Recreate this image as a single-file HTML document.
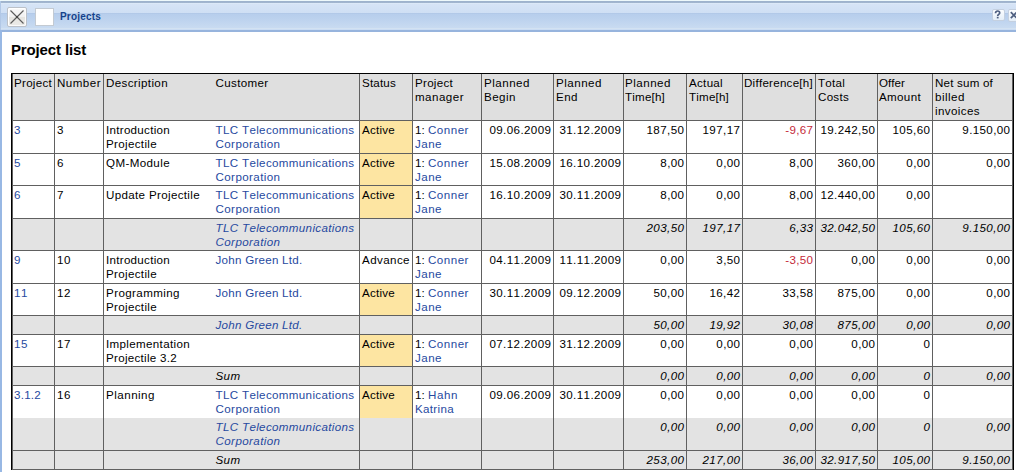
<!DOCTYPE html>
<html><head><meta charset="utf-8">
<style>
html,body{margin:0;padding:0;width:1016px;height:472px;overflow:hidden;background:#fff;font-family:"Liberation Sans",sans-serif;}
span{font-kerning:none;font-variant-ligatures:none;}
#frame{position:absolute;left:0;top:0;width:1016px;height:472px;overflow:hidden;background:#fff;}
#lb{position:absolute;left:0;top:30px;width:2px;height:442px;background:#98b8e4;}
#lt{position:absolute;left:0;top:1px;width:1px;height:29px;background:#b2c8e6;}
#tb{position:absolute;left:0;top:0;width:1016px;height:32px;
background:linear-gradient(to bottom,#eef9fb 0px,#eef9fb 1px,#9db2cc 1px,#a3b7cf 3px,#e2eefa 3px,#d6e4f6 4px,#cfdff4 13px,#b2c9e8 13px,#b2c9e8 14px,#b7ceec 14px,#bcd2ee 19px,#c9dbf1 28px,#d3e2f2 28px,#d3e2f2 29px,#cadcf3 29px,#cadcf3 30px,#97b4dd 30px,#97b4dd 32px);}
#closebtn{position:absolute;left:7px;top:7px;width:18px;height:18px;border:1px solid #bcc1c8;border-radius:2px;background:linear-gradient(#f9f9f9 0%,#f1f1f1 48%,#e6e5e1 52%,#ecebe8 100%);box-shadow:inset 1px 1px 0 #fff,inset -1px -1px 0 #fafafa;}
#wbox{position:absolute;left:35px;top:8px;width:17px;height:16px;border:1px solid #c3cad2;background:#fff;}
#title{position:absolute;left:60px;top:11px;font-weight:bold;font-size:10px;color:#15428b;line-height:12px;white-space:nowrap;}
#helpbtn{position:absolute;left:992px;top:9px;width:11px;height:10px;border:1px solid #c4d0e0;border-radius:2px;background:linear-gradient(#fbfdff,#e4eef8);}
#xbtn{position:absolute;left:1008px;top:9px;width:11px;height:11px;border:1px solid #c4d0e0;border-radius:2px;background:linear-gradient(#fbfdff,#e4eef8);}
h1{position:absolute;left:11px;top:41px;margin:0;font-size:15px;font-weight:bold;line-height:17px;color:#000;white-space:nowrap;}
#tw{position:absolute;left:11px;top:73px;width:1001px;border:1px solid #000;border-bottom:none;height:396px;overflow:hidden;}
table{width:1001px;border-collapse:collapse;border-style:hidden;table-layout:fixed;font-size:11.6px;line-height:14px;color:#000;}
td{border:1px solid #606060;padding:2px 2px 0 2.5px;vertical-align:top;overflow:hidden;white-space:nowrap;}
tr.h td{background:#dfdfdf;}
tr.s td{background:#e3e3e3;font-style:italic;}
td.r{text-align:right;}
td.nb{border-left:none;}
td.na{border-right:none;}
.a{color:#2649a0;}
td.y{background:#fde5a2;}
.neg{color:#c42a3a;}
tr.nt td{border-top:none;}
tr.nbt td{border-bottom:none;}
td:first-child{box-shadow:inset 1px 0 0 #606060;}
td:last-child{box-shadow:inset -1px 0 0 #606060;}
td.r:last-child{padding-right:3.5px;}
tr.h td:nth-child(1),td:first-child{padding-left:2px;}
tr.h td:nth-child(9),tr.h td:nth-child(11),tr.h td:nth-child(13){padding-left:1.5px;}

</style></head><body>
<div id="frame">
<div id="tb"></div>
<div id="lb"></div>
<div id="lt"></div>
<div id="closebtn"><svg width="20" height="20" style="position:absolute;left:-1px;top:-1px"><path d="M3.5 3.5L16.5 16.5M16.5 3.5L3.5 16.5" stroke="#5c5c5c" stroke-width="1.15"/><rect x="9" y="9" width="2" height="2" fill="#333" opacity="0.6"/></svg></div>
<div id="wbox"></div>
<div id="title"><span style="letter-spacing:0.192px">Projects</span></div>
<div id="helpbtn"><svg width="13" height="13" style="position:absolute;left:-1px;top:-1px"><path d="M3.5 4.3C3.5 2.7 4.4 2 5.6 2C6.9 2 7.7 2.8 7.7 3.9C7.7 5.3 5.7 5.5 5.7 7" fill="none" stroke="#4e5f80" stroke-width="1.7"/><rect x="4.8" y="7.8" width="1.8" height="1.6" fill="#4e5f80"/></svg></div>
<div id="xbtn"><svg width="13" height="13" style="position:absolute;left:-1px;top:-1px"><path d="M2.8 3.2L8.8 9.2M8.8 3.2L2.8 9.2" stroke="#4e5f80" stroke-width="1.7"/></svg></div>
<h1><span style="letter-spacing:-0.141px">Project list</span></h1>
<div id="tw">
<table>
<colgroup><col style="width:42px"><col style="width:49px"><col style="width:110px"><col style="width:146px"><col style="width:53px"><col style="width:69px"><col style="width:72px"><col style="width:70px"><col style="width:63px"><col style="width:56px"><col style="width:73px"><col style="width:62px"><col style="width:55px"><col style="width:81px"></colgroup>
<tr class="h" style="height:46px"><td><span style="letter-spacing:0.271px">Project</span></td><td><span style="letter-spacing:0.457px">Number</span></td><td class="na"><span style="letter-spacing:0.362px">Description</span></td><td class="nb"><span style="letter-spacing:0.340px">Customer</span></td><td><span style="letter-spacing:0.186px">Status</span></td><td><span style="letter-spacing:0.271px">Project</span><br><span style="letter-spacing:0.460px">manager</span></td><td><span style="letter-spacing:0.490px">Planned</span><br><span style="letter-spacing:0.466px">Begin</span></td><td><span style="letter-spacing:0.490px">Planned</span><br><span style="letter-spacing:0.453px">End</span></td><td><span style="letter-spacing:0.490px">Planned</span><br><span style="letter-spacing:0.189px">Time[h]</span></td><td><span style="letter-spacing:0.293px">Actual</span><br><span style="letter-spacing:0.189px">Time[h]</span></td><td><span style="letter-spacing:0.249px">Difference[h]</span></td><td><span style="letter-spacing:0.242px">Total</span><br><span style="letter-spacing:0.270px">Costs</span></td><td><span style="letter-spacing:0.043px">Offer</span><br><span style="letter-spacing:0.337px">Amount</span></td><td><span style="letter-spacing:0.191px">Net sum of</span><br><span style="letter-spacing:0.486px">billed</span><br><span style="letter-spacing:0.386px">invoices</span></td></tr>
<tr style="height:33px"><td><span class="a" style="letter-spacing:0.549px">3</span></td><td><span style="letter-spacing:0.549px">3</span></td><td class="na"><span style="letter-spacing:0.282px">Introduction</span><br><span style="letter-spacing:0.329px">Projectile</span></td><td class="nb"><span class="a" style="letter-spacing:0.340px">TLC Telecommunications</span><br><span class="a" style="letter-spacing:0.399px">Corporation</span></td><td class="y"><span style="letter-spacing:0.235px">Active</span></td><td><span style="letter-spacing:0.034px">1: </span><span class="a" style="letter-spacing:0.492px">Conner</span><br><span class="a" style="letter-spacing:0.461px">Jane</span></td><td class="r"><span style="letter-spacing:0.394px;margin-right:-0.894px">09.06.2009</span></td><td class="r"><span style="letter-spacing:0.394px;margin-right:-0.894px">31.12.2009</span></td><td class="r"><span style="letter-spacing:0.420px;margin-right:-0.920px">187,50</span></td><td class="r"><span style="letter-spacing:0.420px;margin-right:-0.920px">197,17</span></td><td class="r"><span class="neg" style="letter-spacing:0.312px;margin-right:-0.812px">-9,67</span></td><td class="r"><span style="letter-spacing:0.377px;margin-right:-0.877px">19.242,50</span></td><td class="r"><span style="letter-spacing:0.420px;margin-right:-0.920px">105,60</span></td><td class="r"><span style="letter-spacing:0.356px;margin-right:-0.856px">9.150,00</span></td></tr>
<tr style="height:32px"><td><span class="a" style="letter-spacing:0.549px">5</span></td><td><span style="letter-spacing:0.549px">6</span></td><td class="na"><span style="letter-spacing:0.378px">QM-Module</span></td><td class="nb"><span class="a" style="letter-spacing:0.340px">TLC Telecommunications</span><br><span class="a" style="letter-spacing:0.399px">Corporation</span></td><td class="y"><span style="letter-spacing:0.235px">Active</span></td><td><span style="letter-spacing:0.034px">1: </span><span class="a" style="letter-spacing:0.492px">Conner</span><br><span class="a" style="letter-spacing:0.461px">Jane</span></td><td class="r"><span style="letter-spacing:0.394px;margin-right:-0.894px">15.08.2009</span></td><td class="r"><span style="letter-spacing:0.394px;margin-right:-0.894px">16.10.2009</span></td><td class="r"><span style="letter-spacing:0.356px;margin-right:-0.856px">8,00</span></td><td class="r"><span style="letter-spacing:0.356px;margin-right:-0.856px">0,00</span></td><td class="r"><span style="letter-spacing:0.356px;margin-right:-0.856px">8,00</span></td><td class="r"><span style="letter-spacing:0.420px;margin-right:-0.920px">360,00</span></td><td class="r"><span style="letter-spacing:0.356px;margin-right:-0.856px">0,00</span></td><td class="r"><span style="letter-spacing:0.356px;margin-right:-0.856px">0,00</span></td></tr>
<tr style="height:33px"><td><span class="a" style="letter-spacing:0.549px">6</span></td><td><span style="letter-spacing:0.549px">7</span></td><td class="na"><span style="letter-spacing:0.333px">Update Projectile</span></td><td class="nb"><span class="a" style="letter-spacing:0.340px">TLC Telecommunications</span><br><span class="a" style="letter-spacing:0.399px">Corporation</span></td><td class="y"><span style="letter-spacing:0.235px">Active</span></td><td><span style="letter-spacing:0.034px">1: </span><span class="a" style="letter-spacing:0.492px">Conner</span><br><span class="a" style="letter-spacing:0.461px">Jane</span></td><td class="r"><span style="letter-spacing:0.394px;margin-right:-0.894px">16.10.2009</span></td><td class="r"><span style="letter-spacing:0.394px;margin-right:-0.894px">30.11.2009</span></td><td class="r"><span style="letter-spacing:0.356px;margin-right:-0.856px">8,00</span></td><td class="r"><span style="letter-spacing:0.356px;margin-right:-0.856px">0,00</span></td><td class="r"><span style="letter-spacing:0.356px;margin-right:-0.856px">8,00</span></td><td class="r"><span style="letter-spacing:0.377px;margin-right:-0.877px">12.440,00</span></td><td class="r"><span style="letter-spacing:0.356px;margin-right:-0.856px">0,00</span></td><td class="r"></td></tr>
<tr class="s" style="height:32px"><td></td><td></td><td class="na"></td><td class="nb"><span class="a" style="letter-spacing:0.340px">TLC Telecommunications</span><br><span class="a" style="letter-spacing:0.399px">Corporation</span></td><td></td><td></td><td></td><td></td><td class="r"><span style="letter-spacing:0.420px;margin-right:-0.920px">203,50</span></td><td class="r"><span style="letter-spacing:0.420px;margin-right:-0.920px">197,17</span></td><td class="r"><span style="letter-spacing:0.356px;margin-right:-0.856px">6,33</span></td><td class="r"><span style="letter-spacing:0.377px;margin-right:-0.877px">32.042,50</span></td><td class="r"><span style="letter-spacing:0.420px;margin-right:-0.920px">105,60</span></td><td class="r"><span style="letter-spacing:0.356px;margin-right:-0.856px">9.150,00</span></td></tr>
<tr style="height:33px"><td><span class="a" style="letter-spacing:0.549px">9</span></td><td><span style="letter-spacing:0.549px">10</span></td><td class="na"><span style="letter-spacing:0.282px">Introduction</span><br><span style="letter-spacing:0.329px">Projectile</span></td><td class="nb"><span class="a" style="letter-spacing:0.254px">John Green Ltd.</span></td><td><span style="letter-spacing:0.408px">Advance</span></td><td><span style="letter-spacing:0.034px">1: </span><span class="a" style="letter-spacing:0.492px">Conner</span><br><span class="a" style="letter-spacing:0.461px">Jane</span></td><td class="r"><span style="letter-spacing:0.394px;margin-right:-0.894px">04.11.2009</span></td><td class="r"><span style="letter-spacing:0.394px;margin-right:-0.894px">11.11.2009</span></td><td class="r"><span style="letter-spacing:0.356px;margin-right:-0.856px">0,00</span></td><td class="r"><span style="letter-spacing:0.356px;margin-right:-0.856px">3,50</span></td><td class="r"><span class="neg" style="letter-spacing:0.312px;margin-right:-0.812px">-3,50</span></td><td class="r"><span style="letter-spacing:0.356px;margin-right:-0.856px">0,00</span></td><td class="r"><span style="letter-spacing:0.356px;margin-right:-0.856px">0,00</span></td><td class="r"><span style="letter-spacing:0.356px;margin-right:-0.856px">0,00</span></td></tr>
<tr style="height:32px"><td><span class="a" style="letter-spacing:0.549px">11</span></td><td><span style="letter-spacing:0.549px">12</span></td><td class="na"><span style="letter-spacing:0.398px">Programming</span><br><span style="letter-spacing:0.329px">Projectile</span></td><td class="nb"><span class="a" style="letter-spacing:0.254px">John Green Ltd.</span></td><td class="y"><span style="letter-spacing:0.235px">Active</span></td><td><span style="letter-spacing:0.034px">1: </span><span class="a" style="letter-spacing:0.492px">Conner</span><br><span class="a" style="letter-spacing:0.461px">Jane</span></td><td class="r"><span style="letter-spacing:0.394px;margin-right:-0.894px">30.11.2009</span></td><td class="r"><span style="letter-spacing:0.394px;margin-right:-0.894px">09.12.2009</span></td><td class="r"><span style="letter-spacing:0.394px;margin-right:-0.894px">50,00</span></td><td class="r"><span style="letter-spacing:0.394px;margin-right:-0.894px">16,42</span></td><td class="r"><span style="letter-spacing:0.394px;margin-right:-0.894px">33,58</span></td><td class="r"><span style="letter-spacing:0.420px;margin-right:-0.920px">875,00</span></td><td class="r"><span style="letter-spacing:0.356px;margin-right:-0.856px">0,00</span></td><td class="r"><span style="letter-spacing:0.356px;margin-right:-0.856px">0,00</span></td></tr>
<tr class="s" style="height:19px"><td></td><td></td><td class="na"></td><td class="nb"><span class="a" style="letter-spacing:0.254px">John Green Ltd.</span></td><td></td><td></td><td></td><td></td><td class="r"><span style="letter-spacing:0.394px;margin-right:-0.894px">50,00</span></td><td class="r"><span style="letter-spacing:0.394px;margin-right:-0.894px">19,92</span></td><td class="r"><span style="letter-spacing:0.394px;margin-right:-0.894px">30,08</span></td><td class="r"><span style="letter-spacing:0.420px;margin-right:-0.920px">875,00</span></td><td class="r"><span style="letter-spacing:0.356px;margin-right:-0.856px">0,00</span></td><td class="r"><span style="letter-spacing:0.356px;margin-right:-0.856px">0,00</span></td></tr>
<tr style="height:32px"><td><span class="a" style="letter-spacing:0.549px">15</span></td><td><span style="letter-spacing:0.549px">17</span></td><td class="na"><span style="letter-spacing:0.335px">Implementation</span><br><span style="letter-spacing:0.282px">Projectile 3.2</span></td><td class="nb"></td><td class="y"><span style="letter-spacing:0.235px">Active</span></td><td><span style="letter-spacing:0.034px">1: </span><span class="a" style="letter-spacing:0.492px">Conner</span><br><span class="a" style="letter-spacing:0.461px">Jane</span></td><td class="r"><span style="letter-spacing:0.394px;margin-right:-0.894px">07.12.2009</span></td><td class="r"><span style="letter-spacing:0.394px;margin-right:-0.894px">31.12.2009</span></td><td class="r"><span style="letter-spacing:0.356px;margin-right:-0.856px">0,00</span></td><td class="r"><span style="letter-spacing:0.356px;margin-right:-0.856px">0,00</span></td><td class="r"><span style="letter-spacing:0.356px;margin-right:-0.856px">0,00</span></td><td class="r"><span style="letter-spacing:0.356px;margin-right:-0.856px">0,00</span></td><td class="r"><span style="letter-spacing:0.549px;margin-right:-1.049px">0</span></td><td class="r"></td></tr>
<tr class="s" style="height:19px"><td></td><td></td><td class="na"></td><td class="nb"><span style="letter-spacing:0.383px">Sum</span></td><td></td><td></td><td></td><td></td><td class="r"><span style="letter-spacing:0.356px;margin-right:-0.856px">0,00</span></td><td class="r"><span style="letter-spacing:0.356px;margin-right:-0.856px">0,00</span></td><td class="r"><span style="letter-spacing:0.356px;margin-right:-0.856px">0,00</span></td><td class="r"><span style="letter-spacing:0.356px;margin-right:-0.856px">0,00</span></td><td class="r"><span style="letter-spacing:0.549px;margin-right:-1.049px">0</span></td><td class="r"><span style="letter-spacing:0.356px;margin-right:-0.856px">0,00</span></td></tr>
<tr class="nbt" style="height:33px"><td><span class="a" style="letter-spacing:0.240px">3.1.2</span></td><td><span style="letter-spacing:0.549px">16</span></td><td class="na"><span style="letter-spacing:0.481px">Planning</span></td><td class="nb"><span class="a" style="letter-spacing:0.340px">TLC Telecommunications</span><br><span class="a" style="letter-spacing:0.399px">Corporation</span></td><td class="y"><span style="letter-spacing:0.235px">Active</span></td><td><span style="letter-spacing:0.034px">1: </span><span class="a" style="letter-spacing:0.567px">Hahn</span><br><span class="a" style="letter-spacing:0.321px">Katrina</span></td><td class="r"><span style="letter-spacing:0.394px;margin-right:-0.894px">09.06.2009</span></td><td class="r"><span style="letter-spacing:0.394px;margin-right:-0.894px">30.11.2009</span></td><td class="r"><span style="letter-spacing:0.356px;margin-right:-0.856px">0,00</span></td><td class="r"><span style="letter-spacing:0.356px;margin-right:-0.856px">0,00</span></td><td class="r"><span style="letter-spacing:0.356px;margin-right:-0.856px">0,00</span></td><td class="r"><span style="letter-spacing:0.356px;margin-right:-0.856px">0,00</span></td><td class="r"><span style="letter-spacing:0.549px;margin-right:-1.049px">0</span></td><td class="r"></td></tr>
<tr class="s nt" style="height:32px"><td></td><td></td><td class="na"></td><td class="nb"><span class="a" style="letter-spacing:0.340px">TLC Telecommunications</span><br><span class="a" style="letter-spacing:0.399px">Corporation</span></td><td></td><td></td><td></td><td></td><td class="r"><span style="letter-spacing:0.356px;margin-right:-0.856px">0,00</span></td><td class="r"><span style="letter-spacing:0.356px;margin-right:-0.856px">0,00</span></td><td class="r"><span style="letter-spacing:0.356px;margin-right:-0.856px">0,00</span></td><td class="r"><span style="letter-spacing:0.356px;margin-right:-0.856px">0,00</span></td><td class="r"><span style="letter-spacing:0.549px;margin-right:-1.049px">0</span></td><td class="r"><span style="letter-spacing:0.356px;margin-right:-0.856px">0,00</span></td></tr>
<tr class="s" style="height:19px"><td></td><td></td><td class="na"></td><td class="nb"><span style="letter-spacing:0.383px">Sum</span></td><td></td><td></td><td></td><td></td><td class="r"><span style="letter-spacing:0.420px;margin-right:-0.920px">253,00</span></td><td class="r"><span style="letter-spacing:0.420px;margin-right:-0.920px">217,00</span></td><td class="r"><span style="letter-spacing:0.394px;margin-right:-0.894px">36,00</span></td><td class="r"><span style="letter-spacing:0.377px;margin-right:-0.877px">32.917,50</span></td><td class="r"><span style="letter-spacing:0.420px;margin-right:-0.920px">105,00</span></td><td class="r"><span style="letter-spacing:0.356px;margin-right:-0.856px">9.150,00</span></td></tr>
<tr class="s" style="height:19px"><td></td><td></td><td class="na"></td><td class="nb"></td><td></td><td></td><td></td><td></td><td class="r"></td><td class="r"></td><td class="r"></td><td class="r"></td><td class="r"></td><td class="r"></td></tr>
</table>
</div>
</div>
</body></html>
